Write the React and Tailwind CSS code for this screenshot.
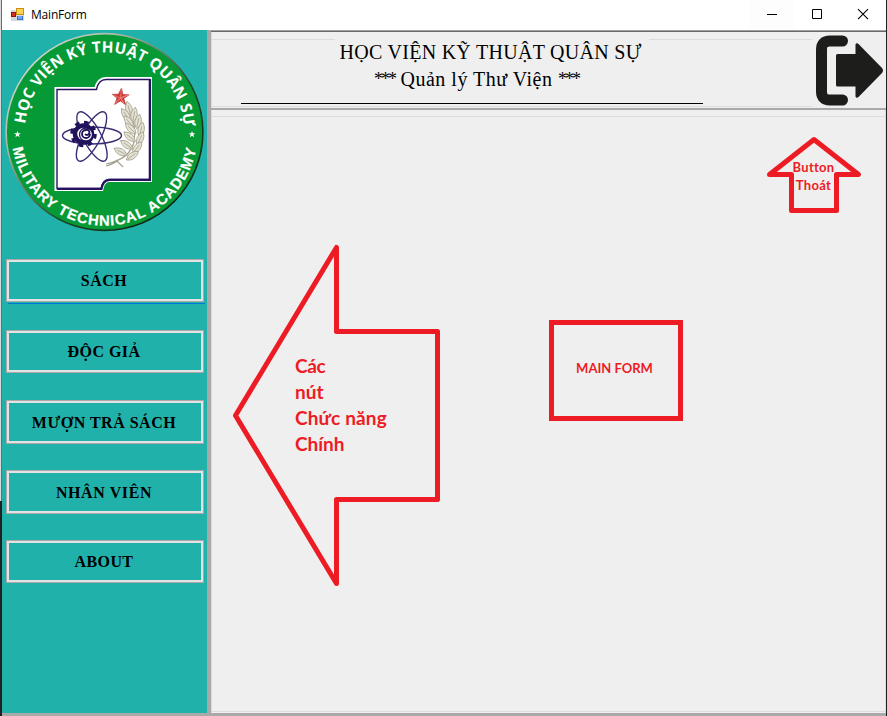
const serif = "font-['Liberation_Serif',serif]";

const menu = [
  { label: 'SÁCH', box: 'h-[43px]', text: 'tracking-[0.5px]', focus: true },
  { label: 'ĐỘC GIẢ', box: 'mt-7 h-[43px]', text: 'tracking-[0.45px]' },
  { label: 'MƯỢN TRẢ SÁCH', box: 'mt-[27px] h-[44px]', text: 'pt-px tracking-[0.5px]' },
  { label: 'NHÂN VIÊN', box: 'mt-[26px] h-[44px]', text: 'pt-px tracking-[0.6px]' },
  { label: 'ABOUT', box: 'mt-[26px] h-[43px]', text: 'tracking-[0.4px]' },
];

function FormIcon() {
  return (
    <svg width="14" height="14" viewBox="0 0 14 14" shapeRendering="crispEdges">
      <rect x="0" y="2" width="13" height="11" fill="#d5d9de" />
      <rect x="5" y="0" width="8" height="7" fill="#c98f10" />
      <rect x="6" y="1" width="6" height="5" fill="#ffd34d" />
      <rect x="0" y="4" width="5" height="5" fill="#8e1510" />
      <rect x="1" y="5" width="3" height="3" fill="#d8301f" />
      <rect x="6" y="8" width="6" height="4" fill="#3a6fc9" />
      <rect x="7" y="8" width="4" height="3" fill="#6ea8f5" />
    </svg>
  );
}

const leaves = [
  [129, 109, -15], [126, 115, -35], [134, 115, 10], [129, 122, -40],
  [138, 122, 12], [131, 129, -45], [141, 130, 14], [130, 137, -50],
  [140, 139, 25], [127, 145, -55], [137, 148, 38], [121, 152, -62], [132, 156, 55],
];

function Emblem() {
  return (
    <svg width="203" height="204" viewBox="3 30 203 204" className="block">
      <defs>
        <linearGradient id="rim" x1="0" y1="0" x2="1" y2="1">
          <stop offset="0" stopColor="#e6efe6" />
          <stop offset="0.3" stopColor="#a9b5a4" />
          <stop offset="0.6" stopColor="#1d4a2a" />
          <stop offset="1" stopColor="#07140a" />
        </linearGradient>
        <path id="topArc" d="M25.2 125 A79.6 79.6 0 0 1 183.8 125" />
        <path id="bottomArc" d="M12.600 147 A93 93 0 0 0 196.400 147" />
      </defs>
      <circle cx="104.5" cy="132" r="99.2" fill="url(#rim)" />
      <circle cx="104.5" cy="132" r="97.6" fill="#069a36" />
      <g fill="#fff" fontWeight="700" fontFamily="'Open Sans', 'Noto Sans', sans-serif">
        <text fontSize="15.4" textLength="237" lengthAdjust="spacing">
          <textPath href="#topArc" startOffset="1">HỌC VIỆN KỸ THUẬT QUÂN SỰ</textPath>
        </text>
        <text fontSize="14.8" fontFamily="'Liberation Sans', sans-serif" textLength="260" lengthAdjust="spacing" stroke="#fff" strokeWidth=".2">
          <textPath href="#bottomArc" startOffset="1">MILITARY TECHNICAL ACADEMY</textPath>
        </text>
      </g>
      <path id="s" d="M17.5 131l.9 2.2 2.4.1-1.9 1.5.7 2.4-2.1-1.4-2.1 1.4.7-2.4-1.9-1.5 2.4-.1z" fill="#fff" />
      <use href="#s" x="174.5" />
      <path d="M57 89.5H96.5Q98.5 79.5 106 79.5H149.5V179.5H109Q102.5 180 101 188.5H57Z" fill="#fff" stroke="#fff" strokeWidth="5" />
      <path d="M57 89.5H96.5Q98.5 79.5 106 79.5H149.5V179.5H109Q102.5 180 101 188.5H57Z" fill="#fff" stroke="#25135f" strokeWidth="1.4" />
      <path d="M150 79V179.8H109Q103 180.5 101.5 188.8H57" fill="none" stroke="#25135f" strokeWidth="2.2" />
      <g fill="none" stroke="#3a2a72" strokeWidth="1.4">
        <ellipse cx="92" cy="135.5" rx="29.5" ry="8.5" />
        <ellipse cx="92" cy="136.5" rx="27.5" ry="9" transform="rotate(62 92 136.5)" />
        <ellipse cx="91.5" cy="136.500" rx="27.5" ry="9" transform="rotate(-62 91.5 136.5)" />
      </g>
      <circle cx="83.500" cy="134" r="8.500" fill="#fff" stroke="#22125c" strokeWidth="4.500" />
      <circle cx="83.500" cy="134" r="11.800" fill="none" stroke="#22125c" strokeWidth="3" strokeDasharray="4.6 4.7" />
      <circle cx="86" cy="134.500" r="6.500" fill="#fff" stroke="#22125c" strokeWidth="1.300" />
      <path d="M90 134a4 4 0 1 1-4-4 2.500 2.500 0 1 1-1 4" fill="none" stroke="#22125c" strokeWidth="1.800" />
      <path d="M121.500 88l1.400 6.500 6.300.2-5.400 3.700 2 6.600-5.300-4.100-5.900 3.500 2.400-6.300-4.800-3.800 6.200-.1z" fill="#d63a35" stroke="#b02c2c" strokeWidth=".6" />
      <path d="M121.500 88l-1 10 3.300 5-3.300-5 8.500-3.500-8.500 3.500-5.500 5.500 5.500-5.500-7.500-3" stroke="#f29a90" strokeWidth=".6" fill="none" />
      <g fill="#e6e3d4" stroke="#a5a190" strokeWidth=".8">
        <path d="M106 164Q130 159 134 142Q137 124 128 106M106 166Q114 164 118 160M116 160L123 167" fill="none" strokeWidth="1.200" />
        {leaves.map(([x, y, r]) => (
          <path key={`${x}-${y}`} d="M0 7Q-6.500 0 0-8Q6.500 0 0 7ZM0 5V-4" transform={`translate(${x} ${y}) rotate(${r})`} />
        ))}
      </g>
    </svg>
  );
}

function ExitIcon() {
  return (
    <svg width="70" height="72" viewBox="815 34 70 72" fill="#1d1d1b">
      <path d="M842.500 41H830Q821.500 41 821.500 49.500V91.500Q821.500 100 830 100H842.500" fill="none" stroke="#1d1d1b" strokeWidth="11" strokeLinecap="round" />
      <path d="M837.500 54H855.500V44.500Q856.200 42.400 858.500 44L882 68Q884 70.500 882 73L858.500 97Q856.200 98.600 855.500 96.500V86.500H837.500Q836 86.500 836 85V55.500Q836 54 837.500 54Z" />
    </svg>
  );
}

function TitleBar() {
  return (
    <div className="flex h-[30px] shrink-0 items-center bg-white pl-[9px]">
      <FormIcon />
      <span className="ml-1.5 grow font-['Open_Sans','Noto_Sans',sans-serif] text-[12px] leading-[16px] tracking-[-0.2px] text-black">MainForm</span>
      <svg width="137" height="30" viewBox="749 0 137 30" fill="none" stroke="#000">
        <rect x="749" y="0" width="45" height="29" fill="#fdfdfd" stroke="none" />
        <path d="M767 14.500H777" />
        <path d="M812.500 9.500H821.500V18.500H812.500Z" />
        <path d="M858 9.200L868 19.200M868 9.200L858 19.200" strokeWidth="1.100" />
      </svg>
    </div>
  );
}

function Stars() {
  return <span className="inline-block w-[21px] translate-y-[-1px] text-[18px] leading-none tracking-[-2px]">***</span>;
}

function Annotations() {
  return (
    <>
      <svg className="absolute left-0 top-0" width="673" height="604" viewBox="212 110 673 604" fill="none" stroke="#ed1c24" strokeWidth="5" strokeLinejoin="round">
        <path d="M336.500 247.500V331.500H437.500V499.500H336.500V583.500L235.500 415.500Z" />
        <path d="M814 139.500L858.500 174.500H836.500V210.500H791.500V174.500H769.500Z" />
      </svg>
      <div className="absolute left-[83px] top-[243px] text-[19px] leading-[26px]">
        <p className="tracking-[-0.4px]">Các</p>
        <p>nút</p>
        <p className="tracking-[0.15px]">Chức năng</p>
        <p>Chính</p>
      </div>
      <div className="absolute left-[337px] top-[210px] flex h-[101px] w-[134px] items-center justify-center border-[5px] border-[#ed1c24] pb-1 pr-[3px] text-[13px]">MAIN FORM</div>
      <div className="absolute left-[562px] top-[48px] w-[79px] text-center text-[13px] leading-[18px]">
        <p className="tracking-[0.3px]">Button</p>
        <p className="tracking-[0.3px]">Thoát</p>
      </div>
    </>
  );
}

export default function App() {
  return (
    <div className="flex h-[716px] w-[887px] overflow-hidden bg-[#efefef]">
      <div className="flex w-[2px] shrink-0 flex-col">
        <div className="h-[501px] border-r border-[#6b6f70] bg-[#d9d9d9]" />
        <div className="grow bg-[#202020]" />
      </div>
      <div className="flex w-[884px] flex-col">
        <TitleBar />
        <div className="flex h-[683px]">
          <aside className="flex w-[205px] shrink-0 flex-col bg-[#20b2aa]">
            <div className="h-[229px] pl-px">
              <Emblem />
            </div>
            <nav className="flex flex-col pl-1">
              {menu.map((m) => (
                <button key={m.label} className={`relative w-[198px] border border-[#a9a9a9] ${m.box}`}>
                  <span className={`flex h-full items-center justify-center border-2 border-[#e3e3e3] pr-[2px] text-[16px] font-bold text-black ${serif} ${m.text}`}>{m.label}</span>
                  {m.focus && <span className="absolute -bottom-[3px] left-px h-px w-[197px] bg-[#0078d7]" />}
                </button>
              ))}
            </nav>
          </aside>
          <div className="w-1 shrink-0 bg-[#a9a9a9]" />
          <div className="flex w-[675px] flex-col">
            <div className="h-px bg-[#a0a0a0]" />
            <div className="h-px bg-[#696969]" />
            <header className="flex h-[76px] border-l border-[#dcdcdc]">
              <div className="flex w-[600px] flex-col">
                <div className="flex h-[68px] flex-col items-center">
                  <div className="mt-[7px] flex w-full">
                    <div className="h-px w-[123px] bg-[#dcdcdc]" />
                    <div className="grow" />
                    <div className="h-px w-[163px] bg-[#dcdcdc]" />
                  </div>
                  <h1 className={`-mt-px ml-[-43px] whitespace-nowrap text-[20px] leading-[26px] tracking-[0.28px] text-black ${serif}`}>HỌC VIỆN KỸ THUẬT QUÂN SỰ</h1>
                  <h2 className={`ml-[-71px] mt-px whitespace-nowrap text-[20px] leading-[26px] tracking-[0.5px] text-black ${serif}`}>
                    <Stars /> Quản lý Thư Viện <Stars />
                  </h2>
                </div>
                <div className="ml-[29px] mt-[3px] h-px w-[462px] bg-black" />
                <div className="mt-[2px] h-px bg-[#dcdcdc]" />
              </div>
              <div className="pl-[3px] pt-[2px]">
                <ExitIcon />
              </div>
            </header>
            <div className="h-[2px] shrink-0 bg-[#a9a9a9]" />
            <main className="relative h-[603px] border-x border-[#dcdcdc] pt-[6px] font-['Lato',sans-serif] font-bold text-[#ed1c24]">
              <div className="h-[596px] border-y border-[#dcdcdc]" />
              <Annotations />
            </main>
          </div>
        </div>
        <div className="h-[3px] bg-[#a9a9a9]" />
      </div>
      <div className="w-px shrink-0 bg-[#202020]" />
    </div>
  );
}
